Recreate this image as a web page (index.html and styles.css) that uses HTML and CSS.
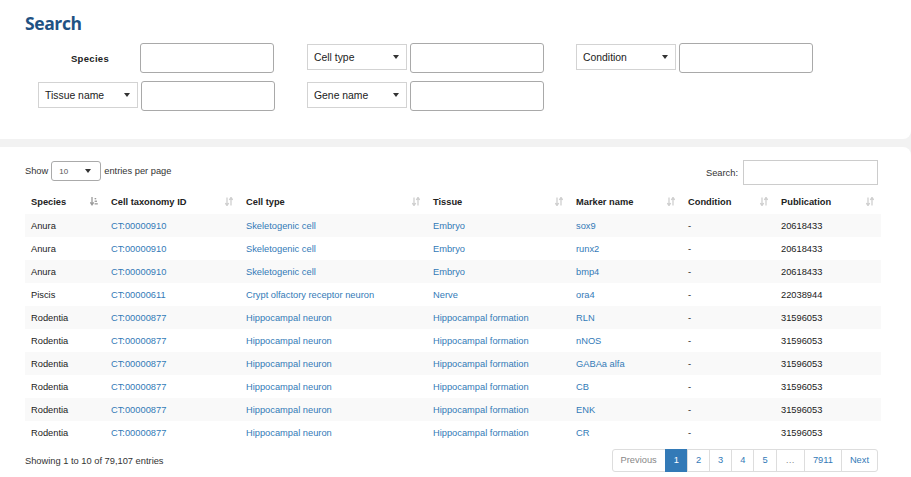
FILE: index.html
```html
<!DOCTYPE html>
<html lang="en">
<head>
<meta charset="utf-8">
<title>Search</title>
<link rel="stylesheet" href="styles.css">
</head>
<body>
<section class="panel search-panel">
  <h1 class="title">Search</h1>
  <div class="filters">
    <div class="filter">
      <span class="flabel">Species</span>
      <input class="finput" type="text">
    </div>
    <div class="filter">
      <div class="fselect"><span>Cell type</span><span class="caret"></span></div>
      <input class="finput" type="text">
    </div>
    <div class="filter">
      <div class="fselect"><span>Condition</span><span class="caret"></span></div>
      <input class="finput" type="text">
    </div>
    <div class="filter">
      <div class="fselect"><span>Tissue name</span><span class="caret"></span></div>
      <input class="finput" type="text">
    </div>
    <div class="filter">
      <div class="fselect"><span>Gene name</span><span class="caret"></span></div>
      <input class="finput" type="text">
    </div>
  </div>
</section>

<section class="panel table-panel">
  <div class="toolbar">
    <div class="length">
      <span>Show</span>
      <div class="lselect"><span>10</span><span class="caret"></span></div>
      <span>entries per page</span>
    </div>
    <div class="tsearch">
      <span>Search:</span>
      <input class="sinput" type="text">
    </div>
  </div>

  <table class="grid">
    <colgroup>
      <col class="c1"><col class="c2"><col class="c3"><col class="c4"><col class="c5"><col class="c6"><col class="c7">
    </colgroup>
    <thead>
      <tr>
        <th><div class="th"><span>Species</span><svg class="sort active" viewBox="0 0 8 9"><path d="M2 0v7M0.3 5.3L2 7.8 3.7 5.3" fill="none" stroke="currentColor" stroke-width="1.3"/><rect x="4.6" y="1" width="1.6" height="1.3" fill="currentColor"/><rect x="4.6" y="3.6" width="2.4" height="1.3" fill="currentColor"/><rect x="4.6" y="6.2" width="3.2" height="1.3" fill="currentColor"/></svg></div></th>
        <th><div class="th"><span>Cell taxonomy ID</span><svg class="sort" viewBox="0 0 8 9"><path d="M2 0.5v7.5M0.3 6L2 8.6 3.7 6M6 8.5v-7.5M4.3 3L6 0.4 7.7 3" fill="none" stroke="currentColor" stroke-width="1.3"/></svg></div></th>
        <th><div class="th"><span>Cell type</span><svg class="sort" viewBox="0 0 8 9"><path d="M2 0.5v7.5M0.3 6L2 8.6 3.7 6M6 8.5v-7.5M4.3 3L6 0.4 7.7 3" fill="none" stroke="currentColor" stroke-width="1.3"/></svg></div></th>
        <th><div class="th"><span>Tissue</span><svg class="sort" viewBox="0 0 8 9"><path d="M2 0.5v7.5M0.3 6L2 8.6 3.7 6M6 8.5v-7.5M4.3 3L6 0.4 7.7 3" fill="none" stroke="currentColor" stroke-width="1.3"/></svg></div></th>
        <th><div class="th"><span>Marker name</span><svg class="sort" viewBox="0 0 8 9"><path d="M2 0.5v7.5M0.3 6L2 8.6 3.7 6M6 8.5v-7.5M4.3 3L6 0.4 7.7 3" fill="none" stroke="currentColor" stroke-width="1.3"/></svg></div></th>
        <th><div class="th"><span>Condition</span><svg class="sort" viewBox="0 0 8 9"><path d="M2 0.5v7.5M0.3 6L2 8.6 3.7 6M6 8.5v-7.5M4.3 3L6 0.4 7.7 3" fill="none" stroke="currentColor" stroke-width="1.3"/></svg></div></th>
        <th><div class="th"><span>Publication</span><svg class="sort" viewBox="0 0 8 9"><path d="M2 0.5v7.5M0.3 6L2 8.6 3.7 6M6 8.5v-7.5M4.3 3L6 0.4 7.7 3" fill="none" stroke="currentColor" stroke-width="1.3"/></svg></div></th>
      </tr>
    </thead>
    <tbody>
      <tr><td>Anura</td><td><a>CT:00000910</a></td><td><a>Skeletogenic cell</a></td><td><a>Embryo</a></td><td><a>sox9</a></td><td>-</td><td>20618433</td></tr>
      <tr><td>Anura</td><td><a>CT:00000910</a></td><td><a>Skeletogenic cell</a></td><td><a>Embryo</a></td><td><a>runx2</a></td><td>-</td><td>20618433</td></tr>
      <tr><td>Anura</td><td><a>CT:00000910</a></td><td><a>Skeletogenic cell</a></td><td><a>Embryo</a></td><td><a>bmp4</a></td><td>-</td><td>20618433</td></tr>
      <tr><td>Piscis</td><td><a>CT:00000611</a></td><td><a>Crypt olfactory receptor neuron</a></td><td><a>Nerve</a></td><td><a>ora4</a></td><td>-</td><td>22038944</td></tr>
      <tr><td>Rodentia</td><td><a>CT:00000877</a></td><td><a>Hippocampal neuron</a></td><td><a>Hippocampal formation</a></td><td><a>RLN</a></td><td>-</td><td>31596053</td></tr>
      <tr><td>Rodentia</td><td><a>CT:00000877</a></td><td><a>Hippocampal neuron</a></td><td><a>Hippocampal formation</a></td><td><a>nNOS</a></td><td>-</td><td>31596053</td></tr>
      <tr><td>Rodentia</td><td><a>CT:00000877</a></td><td><a>Hippocampal neuron</a></td><td><a>Hippocampal formation</a></td><td><a>GABAa alfa</a></td><td>-</td><td>31596053</td></tr>
      <tr><td>Rodentia</td><td><a>CT:00000877</a></td><td><a>Hippocampal neuron</a></td><td><a>Hippocampal formation</a></td><td><a>CB</a></td><td>-</td><td>31596053</td></tr>
      <tr><td>Rodentia</td><td><a>CT:00000877</a></td><td><a>Hippocampal neuron</a></td><td><a>Hippocampal formation</a></td><td><a>ENK</a></td><td>-</td><td>31596053</td></tr>
      <tr><td>Rodentia</td><td><a>CT:00000877</a></td><td><a>Hippocampal neuron</a></td><td><a>Hippocampal formation</a></td><td><a>CR</a></td><td>-</td><td>31596053</td></tr>
    </tbody>
  </table>

  <div class="footer">
    <div class="info">Showing 1 to 10 of 79,107 entries</div>
    <ul class="pager">
      <li class="disabled">Previous</li>
      <li class="current">1</li>
      <li>2</li>
      <li>3</li>
      <li>4</li>
      <li>5</li>
      <li class="disabled ellipsis">…</li>
      <li>7911</li>
      <li>Next</li>
    </ul>
  </div>
</section>
</body>
</html>
```
FILE: styles.css
```css
* { box-sizing: border-box; }

html, body {
  margin: 0;
  padding: 0;
  background: #f2f2f2;
  font-family: "Liberation Sans", Arial, sans-serif;
  color: #333;
}

body {
  height: 477px;
  overflow: hidden;
}

.panel {
  background: #fff;
}

.search-panel {
  height: 139px;
  padding: 11px 25px 0 25px;
  border-radius: 0 0 8px 0;
  margin-bottom: 8px;
}

.title {
  margin: 0;
  font-family: "Open Sans", "Liberation Sans", sans-serif;
  font-weight: 700;
  font-size: 17.5px;
  line-height: 24px;
  letter-spacing: -0.4px;
  color: #1f5283;
}

.filters {
  margin: 8px 0 0 13px;
  display: grid;
  grid-template-columns: repeat(3, 237px);
  column-gap: 32px;
  row-gap: 8px;
}

.filter {
  display: flex;
  align-items: flex-start;
  gap: 3px;
}

.flabel {
  width: 99px;
  height: 30px;
  display: flex;
  align-items: center;
  justify-content: center;
  padding-left: 5px;
  font-size: 9.5px;
  font-weight: 700;
  letter-spacing: 0.3px;
  color: #222;
}

.finput {
  width: 134px;
  height: 30px;
  margin: 0;
  border: 1px solid #a9a9a9;
  border-radius: 3px;
  background: #fff;
  font: inherit;
}

.fselect {
  width: 100px;
  height: 26px;
  margin-top: 1px;
  border: 1px solid #d3d3d3;
  display: flex;
  align-items: center;
  justify-content: space-between;
  padding: 0 6px 0 6px;
  font-size: 10.4px;
  color: #222;
  background: #fff;
}

.caret {
  width: 0;
  height: 0;
  border-left: 3px solid transparent;
  border-right: 3px solid transparent;
  border-top: 4px solid #333;
  margin-right: 1px;
}

.table-panel {
  min-height: 330px;
  padding: 13px 30px 10px 25px;
  border-radius: 0 8px 0 0;
  font-size: 9.3px;
}

.toolbar {
  display: flex;
  justify-content: space-between;
  align-items: center;
  height: 25px;
  padding-right: 3px;
}

.length {
  display: flex;
  align-items: center;
  gap: 3px;
  margin-top: -3px;
}

.lselect {
  width: 50px;
  height: 20px;
  border: 1px solid #aaa;
  border-radius: 3px;
  display: flex;
  align-items: center;
  justify-content: space-between;
  padding: 0 8px 0 7px;
  font-size: 8px;
  color: #555;
}

.tsearch {
  display: flex;
  align-items: center;
  gap: 5px;
}

.sinput {
  width: 135px;
  height: 25px;
  margin: 0;
  border: 1px solid #ccc;
  background: #fff;
}

.grid {
  width: 856px;
  margin-top: 4px;
  border-collapse: collapse;
  table-layout: fixed;
}

.c1 { width: 80px; }
.c2 { width: 135px; }
.c3 { width: 187px; }
.c4 { width: 143px; }
.c5 { width: 112px; }
.c6 { width: 93px; }
.c7 { width: 106px; }

.grid th {
  height: 25px;
  padding: 0 7px 0 6px;
  text-align: left;
  font-weight: 700;
  color: #222;
  vertical-align: middle;
}

.th {
  display: flex;
  justify-content: space-between;
  align-items: center;
}

.sort {
  width: 8px;
  height: 9px;
  color: #cfcfcf;
  flex: none;
}

.sort.active {
  color: #9a9a9a;
}

.grid td {
  height: 23px;
  padding: 0 6px;
  vertical-align: middle;
  white-space: nowrap;
  color: #222;
}

.grid tbody tr:nth-child(odd) td {
  background: #f9f9f9;
}

.grid a {
  color: #337ab7;
  text-decoration: none;
}

.footer {
  display: flex;
  justify-content: space-between;
  align-items: center;
  margin-top: 5px;
  padding-right: 3px;
}

.info {
  color: #333;
}

.pager {
  list-style: none;
  margin: 0;
  padding: 0;
  display: flex;
}

.pager li {
  height: 23px;
  line-height: 21px;
  padding: 0 8px;
  border: 1px solid #ddd;
  margin-left: -1px;
  color: #337ab7;
  background: #fff;
}

.pager li.ellipsis {
  padding: 0 9px;
}

.pager li:first-child {
  border-radius: 3px 0 0 3px;
  margin-left: 0;
}

.pager li:last-child {
  border-radius: 0 3px 3px 0;
}

.pager li.disabled {
  color: #888;
}

.pager li.current {
  background: #337ab7;
  border-color: #337ab7;
  color: #fff;
}
```
